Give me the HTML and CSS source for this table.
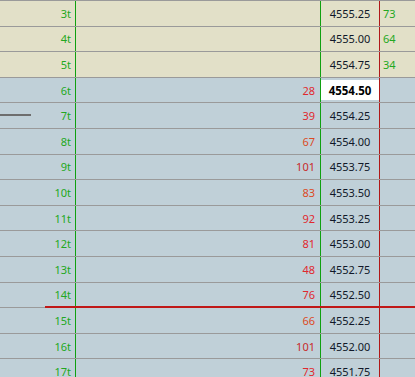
FILE: index.html
```html
<!DOCTYPE html>
<html>
<head>
<meta charset="utf-8">
<link rel="stylesheet" href="styles.css">
</head>
<body>
<div class="ladder">
  <div class="row ask"><div class="c lvl">3t</div><div class="c vol"></div><div class="c px">4555.25</div><div class="c side">73</div></div>
  <div class="row ask"><div class="c lvl">4t</div><div class="c vol"></div><div class="c px">4555.00</div><div class="c side">64</div></div>
  <div class="row ask"><div class="c lvl">5t</div><div class="c vol"></div><div class="c px">4554.75</div><div class="c side">34</div></div>
  <div class="row bid"><div class="c lvl">6t</div><div class="c vol r1">28</div><div class="c px cur"><span class="hl">4554.50</span></div><div class="c side"></div></div>
  <div class="row bid"><div class="c lvl">7t</div><div class="c vol r1">39</div><div class="c px">4554.25</div><div class="c side"></div></div>
  <div class="row bid"><div class="c lvl">8t</div><div class="c vol r2">67</div><div class="c px">4554.00</div><div class="c side"></div></div>
  <div class="row bid"><div class="c lvl">9t</div><div class="c vol r3">101</div><div class="c px">4553.75</div><div class="c side"></div></div>
  <div class="row bid"><div class="c lvl">10t</div><div class="c vol r2">83</div><div class="c px">4553.50</div><div class="c side"></div></div>
  <div class="row bid"><div class="c lvl">11t</div><div class="c vol r1">92</div><div class="c px">4553.25</div><div class="c side"></div></div>
  <div class="row bid"><div class="c lvl">12t</div><div class="c vol r1">81</div><div class="c px">4553.00</div><div class="c side"></div></div>
  <div class="row bid"><div class="c lvl">13t</div><div class="c vol r1">48</div><div class="c px">4552.75</div><div class="c side"></div></div>
  <div class="row bid"><div class="c lvl">14t</div><div class="c vol r1">76</div><div class="c px">4552.50</div><div class="c side"></div></div>
  <div class="row bid"><div class="c lvl">15t</div><div class="c vol r2">66</div><div class="c px">4552.25</div><div class="c side"></div></div>
  <div class="row bid"><div class="c lvl">16t</div><div class="c vol r3">101</div><div class="c px">4552.00</div><div class="c side"></div></div>
  <div class="row bid"><div class="c lvl">17t</div><div class="c vol r1">73</div><div class="c px">4551.75</div><div class="c side"></div></div>
  <div class="mark-gray"></div>
  <div class="mark-red"></div>
</div>
</body>
</html>
```

FILE: styles.css
```css
html, body {
  margin: 0;
  padding: 0;
  width: 415px;
  height: 377px;
  overflow: hidden;
  background: #c0d0d8;
}
.ladder {
  position: relative;
  width: 415px;
  font-family: "Noto Sans", "Open Sans", sans-serif;
  font-size: 11px;
}
.row {
  display: grid;
  grid-template-columns: 76px 245px 59px 35px;
  height: 25.6px;
  box-sizing: border-box;
  border-top: 1px solid #9a9a9a;
}
.row.ask { background: #e2e0c8; }
.row.bid { background: #c0d0d8; }
.c {
  display: flex;
  align-items: center;
  box-sizing: border-box;
  min-width: 0;
  white-space: nowrap;
}
.lvl {
  justify-content: flex-end;
  padding-right: 4px;
  color: #22a822;
  border-right: 1px solid #10a010;
}
.vol {
  justify-content: flex-end;
  padding-right: 5px;
  border-right: 1px solid #10a010;
}
.r1 { color: #e0282e; }
.r2 { color: #dc4a24; }
.r3 { color: #c82a2a; }
.px {
  justify-content: center;
  color: #101828;
  border-right: 1px solid #b01818;
}
.px.cur {
  padding: 2px 0;
  align-items: stretch;
}
.hl {
  flex: 1;
  display: flex;
  align-items: center;
  justify-content: center;
  background: #ffffff;
  font-weight: bold;
  color: #000000;
  font-size: 11.5px;
}
.side {
  padding-left: 3px;
  color: #22a822;
}
.mark-gray {
  position: absolute;
  left: 0;
  top: 114px;
  width: 31px;
  height: 2px;
  background: #6e6e6e;
}
.mark-red {
  position: absolute;
  left: 45px;
  top: 306px;
  width: 370px;
  height: 2px;
  background: #c01818;
}
```
